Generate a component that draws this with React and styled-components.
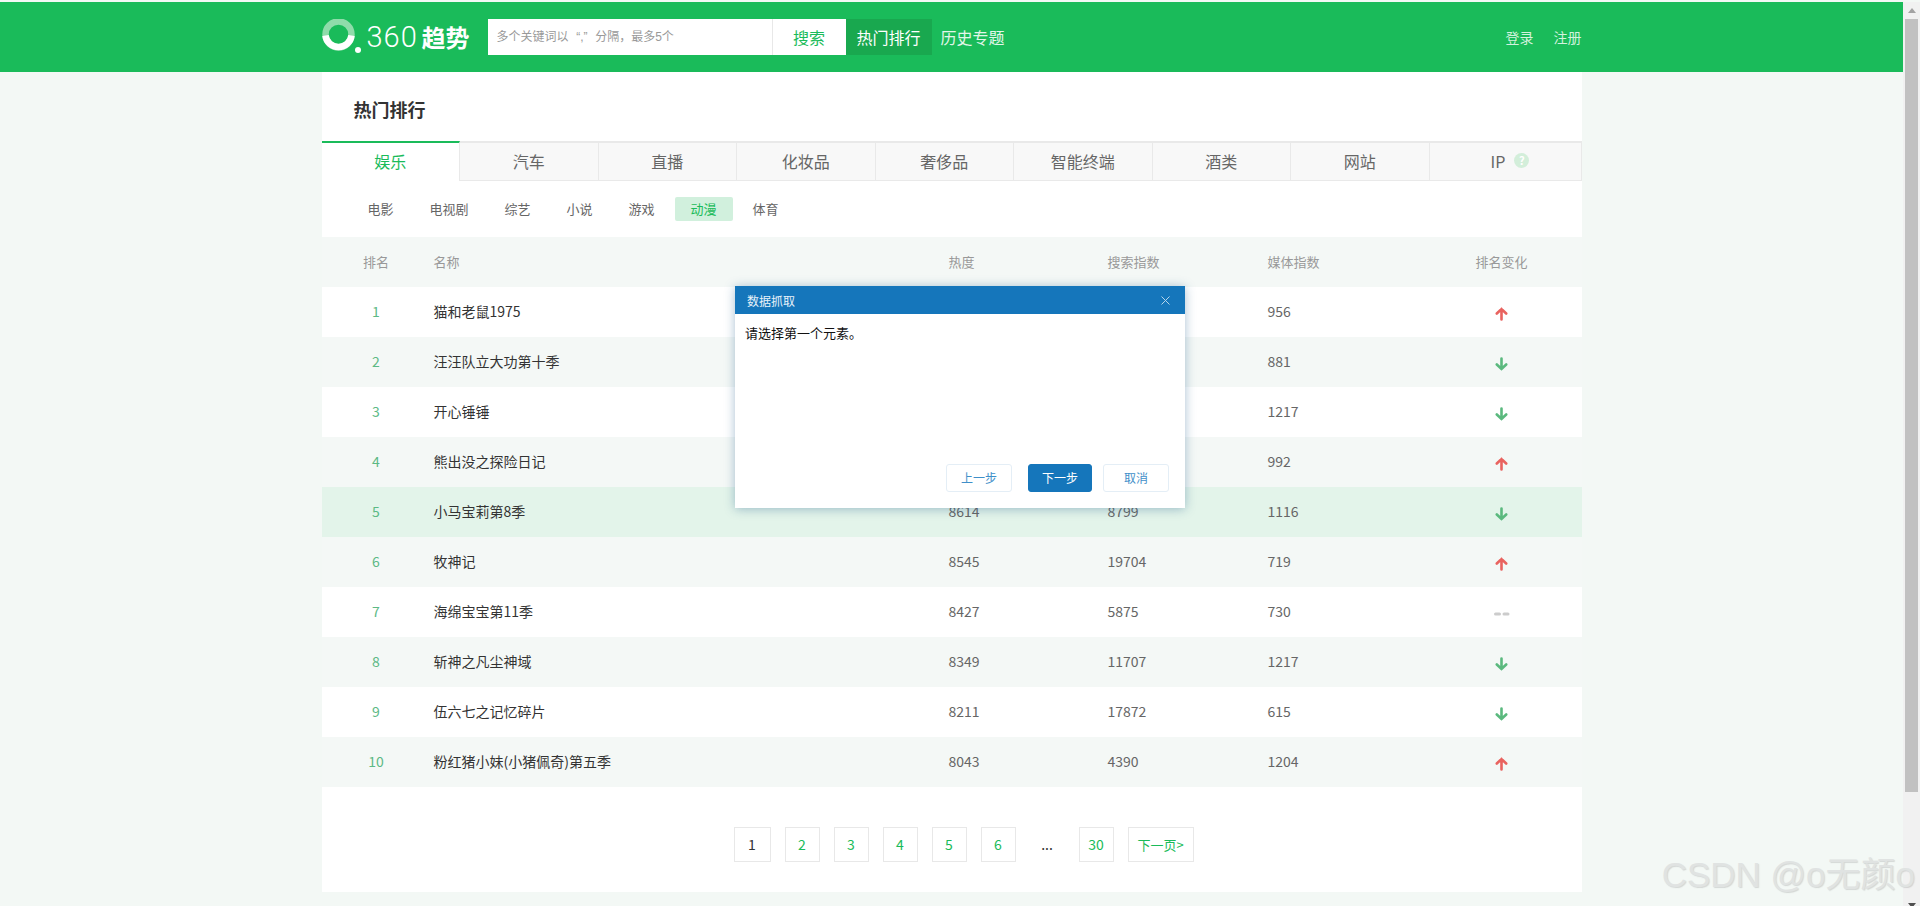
import React from 'react';
import styled, { createGlobalStyle } from 'styled-components';

const GREEN = '#1abb5a';
const BLUE = '#1576bb';

const categories = ['娱乐', '汽车', '直播', '化妆品', '奢侈品', '智能终端', '酒类', '网站'];
const subCategories = ['电影', '电视剧', '综艺', '小说', '游戏', '动漫', '体育'];
const pages = ['1', '2', '3', '4', '5', '6', '...', '30'];

// hot and search values of rows 1-4 sit behind the dialog
const rows = [
  { name: '猫和老鼠1975', media: 956, change: 'up' },
  { name: '汪汪队立大功第十季', media: 881, change: 'down' },
  { name: '开心锤锤', media: 1217, change: 'down' },
  { name: '熊出没之探险日记', media: 992, change: 'up' },
  { name: '小马宝莉第8季', hot: 8614, search: 8799, media: 1116, change: 'down' },
  { name: '牧神记', hot: 8545, search: 19704, media: 719, change: 'up' },
  { name: '海绵宝宝第11季', hot: 8427, search: 5875, media: 730, change: 'flat' },
  { name: '斩神之凡尘神域', hot: 8349, search: 11707, media: 1217, change: 'down' },
  { name: '伍六七之记忆碎片', hot: 8211, search: 17872, media: 615, change: 'down' },
  { name: '粉红猪小妹(小猪佩奇)第五季', hot: 8043, search: 4390, media: 1204, change: 'up' },
];

const GlobalStyle = createGlobalStyle`
  html, body {
    margin: 0;
    padding: 0;
    height: 100%;
    overflow: hidden;
    background: #f3f8f5;
  }
  * {
    box-sizing: border-box;
  }
`;

const Page = styled.div`
  position: relative;
  display: flex;
  width: 1920px;
  height: 906px;
  overflow: hidden;
  font-family: "Noto Sans CJK SC", "Liberation Sans", sans-serif;
  background: #f3f8f5;
`;

const Main = styled.div`
  width: 1903px;
  display: flex;
  flex-direction: column;
  padding-top: 2px;
`;

const Header = styled.header`
  height: 70px;
  background: ${GREEN};
  flex-shrink: 0;
`;

const HeaderInner = styled.div`
  width: 1260px;
  height: 100%;
  margin: 0 auto;
  display: flex;
  align-items: center;
`;

const Logo = styled.div`
  width: 166px;
  height: 36px;
  display: flex;
  align-items: center;
  color: #fff;
`;

const LogoDigits = styled.span`
  width: 52px;
  margin-left: 3px;
  font-family: Roboto, sans-serif;
  font-weight: 300;
  font-size: 29px;
  letter-spacing: 1px;
  line-height: 36px;
  white-space: nowrap;
`;

const LogoWord = styled.span`
  margin-left: 3px;
  font-size: 24px;
  font-weight: 700;
  line-height: 36px;
  white-space: nowrap;
`;

const SearchInput = styled.div`
  width: 284px;
  height: 36px;
  padding-left: 9px;
  background: #fff;
  color: #999;
  font-family: "Liberation Sans", "Noto Sans CJK SC", sans-serif;
  font-size: 12px;
  line-height: 36px;
  white-space: pre;
`;

const QuoteMark = styled.span`
  margin: 0 1px;
`;

const SearchButton = styled.div`
  width: 74px;
  height: 36px;
  background: #fff;
  border-left: 1px solid #e8e8e8;
  color: ${GREEN};
  font-size: 16px;
  line-height: 36px;
  text-align: center;
`;

const NavLink = styled.div`
  height: 36px;
  padding: 0 ${(p) => (p.$active ? '11px' : '9px')};
  margin-right: ${(p) => (p.$active ? '0' : 'auto')};
  background: ${(p) => (p.$active ? '#19a84f' : 'transparent')};
  color: ${(p) => (p.$active ? '#fff' : '#e2f6e9')};
  font-size: 16px;
  line-height: 36px;
  white-space: nowrap;
`;

const UserLink = styled.div`
  margin-left: ${(p) => (p.$first ? '0' : '20px')};
  color: #d3f2de;
  font-size: 14px;
  line-height: 36px;
`;

const Content = styled.main`
  width: 1260px;
  height: 820px;
  margin: 0 auto;
  background: #fff;
`;

const Title = styled.h1`
  height: 69px;
  margin: 0;
  padding-left: 32px;
  color: #333;
  font-size: 18px;
  font-weight: 700;
  line-height: 74px;
`;

const Tabs = styled.div`
  display: flex;
  height: 40px;
`;

const Tab = styled.div`
  flex: ${(p) => (p.$wide ? '0 0 152px' : '1 1 0')};
  display: flex;
  align-items: center;
  justify-content: center;
  padding: 0 0 ${(p) => (p.$active ? '3px' : '2px')} ${(p) => (p.$wide ? '10px' : '0')};
  font-size: 16px;
  color: ${(p) => (p.$active ? GREEN : '#666')};
  background: ${(p) => (p.$active ? '#fff' : '#f8f8f8')};
  border-top: 2px solid ${(p) => (p.$active ? GREEN : '#e9e9e9')};
  border-bottom: ${(p) => (p.$active ? '0' : '1px solid #e9e9e9')};
  border-right: 1px solid #e9e9e9;
`;

const HelpBadge = styled.span`
  width: 15px;
  height: 15px;
  margin-left: 9px;
  border-radius: 50%;
  background: #d3eeda;
  color: #fff;
  font-size: 11px;
  font-weight: 700;
  line-height: 15px;
  text-align: center;
`;

const SubTabs = styled.div`
  height: 56px;
  padding: 16px 0 0 30px;
  display: flex;
  gap: 4px;
`;

const SubTab = styled.div`
  height: 24px;
  padding: 0 16px;
  border-radius: 2px;
  font-size: 13px;
  line-height: 24px;
  color: ${(p) => (p.$active ? GREEN : '#666')};
  background: ${(p) => (p.$active ? '#d1f0dd' : 'transparent')};
`;

const Grid = styled.div`
  height: 50px;
  display: grid;
  grid-template-columns: 109px 518px 159px 160px 154px 160px;
  align-items: center;
  background: ${(p) => p.$bg};
`;

const HeadCell = styled.div`
  padding-bottom: 2px;
  color: #999;
  font-size: 13px;
  text-align: ${(p) => (p.$center ? 'center' : 'left')};
  padding-left: ${(p) => (p.$name ? '3px' : '0')};
`;

const RankCell = styled.div`
  padding-bottom: 2px;
  color: #5cb985;
  font-size: 14px;
  text-align: center;
`;

const NameCell = styled.div`
  padding: 0 0 2px 3px;
  color: #333;
  font-size: 14px;
`;

const NumberCell = styled.div`
  padding-bottom: 2px;
  color: #666;
  font-size: 14px;
`;

const ChangeCell = styled.div`
  display: flex;
  justify-content: center;
  padding-top: 3px;
`;

const Pager = styled.div`
  height: 105px;
  padding: 40px 0 0 412px;
  display: flex;
  gap: 14px;
`;

const PageButton = styled.div`
  height: 35px;
  min-width: 35px;
  padding: 0 ${(p) => (p.$wide ? '9px' : '0')};
  width: ${(p) => (p.$current ? '37px' : 'auto')};
  border: 1px solid ${(p) => (p.$plain ? 'transparent' : '#e8e8e8')};
  color: ${(p) => (p.$current || p.$plain ? '#333' : GREEN)};
  font-size: ${(p) => (p.$wide ? '13px' : '14px')};
  line-height: 33px;
  text-align: center;
  white-space: nowrap;
`;

const Dialog = styled.section`
  position: absolute;
  left: 735px;
  top: 286px;
  width: 450px;
  height: 222px;
  display: flex;
  flex-direction: column;
  background: #fff;
  box-shadow: 0 1px 10px rgba(30, 90, 140, 0.38);
`;

const DialogHead = styled.div`
  height: 28px;
  padding: 0 15px 0 12px;
  display: flex;
  align-items: center;
  justify-content: space-between;
  background: ${BLUE};
  color: #e8f2f9;
  font-size: 12px;
`;

const DialogBody = styled.div`
  flex: 1;
  padding: 9px 10px 0;
  color: #111;
  font-size: 13px;
  line-height: 20px;
`;

const DialogFoot = styled.div`
  height: 44px;
  padding-right: 16px;
  display: flex;
  justify-content: flex-end;
`;

const DialogButton = styled.div`
  width: ${(p) => (p.$primary ? '64px' : '66px')};
  height: 28px;
  margin: ${(p) => (p.$primary ? '0 11px 0 16px' : '0')};
  border: 1px solid ${(p) => (p.$primary ? BLUE : '#e4eef6')};
  border-radius: 3px;
  background: ${(p) => (p.$primary ? BLUE : '#fff')};
  color: ${(p) => (p.$primary ? '#fff' : '#3f8fc9')};
  font-size: 12px;
  line-height: 26px;
  text-align: center;
`;

const Scrollbar = styled.div`
  width: 17px;
  margin-top: 2px;
  background: #f1f1f1;
  display: flex;
  flex-direction: column;
  align-items: center;
`;

const ScrollArrow = styled.div`
  width: 0;
  height: 0;
  border-left: 4px solid transparent;
  border-right: 4px solid transparent;
  ${(p) =>
    p.$down
      ? 'border-top: 5px solid #505050; margin-top: auto; margin-bottom: -2px;'
      : 'border-bottom: 5px solid #a3a3a3; margin: 6px 0 6px;'}
`;

const ScrollThumb = styled.div`
  width: 13px;
  height: 773px;
  background: #c1c1c1;
`;

const Watermark = styled.div`
  position: absolute;
  right: 5px;
  bottom: 9px;
  font-family: "Liberation Sans", "Noto Sans CJK SC", sans-serif;
  font-size: 35px;
  line-height: 44px;
  color: #e0e3e2;
  text-shadow: 1px 1px 1px rgba(120, 120, 120, 0.25);
  white-space: nowrap;
  pointer-events: none;
`;

const LogoMark = () => (
  <svg width="42" height="36" viewBox="0 0 42 36" fill="none">
    <circle cx="16.5" cy="15.5" r="13" stroke="#8fdcaa" strokeWidth="6.5" />
    <path d="M3.5 16.5a13.1 13.1 0 0 0 26 0" stroke="#fff" strokeWidth="6.5" />
    <circle cx="36" cy="31" r="3" fill="#fff" />
  </svg>
);

const ChangeIcon = ({ type }) => {
  if (type === 'flat') {
    return (
      <svg width="16" height="4" viewBox="0 0 16 4">
        <rect x="0" y="0.5" width="7" height="3" rx="1.5" fill="#ccc" />
        <rect x="8.5" y="0.5" width="7" height="3" rx="1.5" fill="#ccc" />
      </svg>
    );
  }
  const up = type === 'up';
  return (
    <svg width="13" height="14" viewBox="0 0 13 14" fill="none" stroke={up ? '#e9635f' : '#5bb97e'} strokeWidth="2.6" strokeLinecap="round">
      {up ? <path d="M6.5 12.5V2M1.8 6.5 6.5 2l4.7 4.5" /> : <path d="M6.5 1.5V12M1.8 7.5 6.5 12l4.7-4.5" />}
    </svg>
  );
};

const CloseIcon = () => (
  <svg width="9" height="9" viewBox="0 0 9 9" stroke="#b7d5ea" strokeWidth="1" fill="none">
    <path d="M.5.5l8 8M8.5.5l-8 8" />
  </svg>
);

const App = () => {
  return (
    <Page>
      <GlobalStyle />
      <Main>
        <Header>
          <HeaderInner>
            <Logo>
              <LogoMark />
              <LogoDigits>360</LogoDigits>
              <LogoWord>趋势</LogoWord>
            </Logo>
            <SearchInput>多个关键词以  <QuoteMark>“,”</QuoteMark>  分隔，最多5个</SearchInput>
            <SearchButton>搜索</SearchButton>
            <NavLink $active>热门排行</NavLink>
            <NavLink>历史专题</NavLink>
            <UserLink $first>登录</UserLink>
            <UserLink>注册</UserLink>
          </HeaderInner>
        </Header>
        <Content>
          <Title>热门排行</Title>
          <Tabs>
            {categories.map((c, i) => (
              <Tab key={c} $active={i === 0}>{c}</Tab>
            ))}
            <Tab $wide>
              IP<HelpBadge>?</HelpBadge>
            </Tab>
          </Tabs>
          <SubTabs>
            {subCategories.map((s) => (
              <SubTab key={s} $active={s === '动漫'}>{s}</SubTab>
            ))}
          </SubTabs>
          <Grid $bg="#f4f8f6">
            <HeadCell $center>排名</HeadCell>
            <HeadCell $name>名称</HeadCell>
            <HeadCell>热度</HeadCell>
            <HeadCell>搜索指数</HeadCell>
            <HeadCell>媒体指数</HeadCell>
            <HeadCell $center>排名变化</HeadCell>
          </Grid>
          {rows.map((r, i) => (
            <Grid key={r.name} $bg={i === 4 ? '#e3f4ea' : i % 2 ? '#f4f8f6' : '#fff'}>
              <RankCell>{i + 1}</RankCell>
              <NameCell>{r.name}</NameCell>
              <NumberCell>{r.hot}</NumberCell>
              <NumberCell>{r.search}</NumberCell>
              <NumberCell>{r.media}</NumberCell>
              <ChangeCell>
                <ChangeIcon type={r.change} />
              </ChangeCell>
            </Grid>
          ))}
          <Pager>
            {pages.map((p) => (
              <PageButton key={p} $current={p === '1'} $plain={p === '...'}>{p}</PageButton>
            ))}
            <PageButton $wide>下一页&gt;</PageButton>
          </Pager>
        </Content>
      </Main>
      <Scrollbar>
        <ScrollArrow />
        <ScrollThumb />
        <ScrollArrow $down />
      </Scrollbar>
      <Dialog>
        <DialogHead>
          数据抓取
          <CloseIcon />
        </DialogHead>
        <DialogBody>请选择第一个元素。</DialogBody>
        <DialogFoot>
          <DialogButton>上一步</DialogButton>
          <DialogButton $primary>下一步</DialogButton>
          <DialogButton>取消</DialogButton>
        </DialogFoot>
      </Dialog>
      <Watermark>CSDN @o无颜o</Watermark>
    </Page>
  );
};

export default App;
